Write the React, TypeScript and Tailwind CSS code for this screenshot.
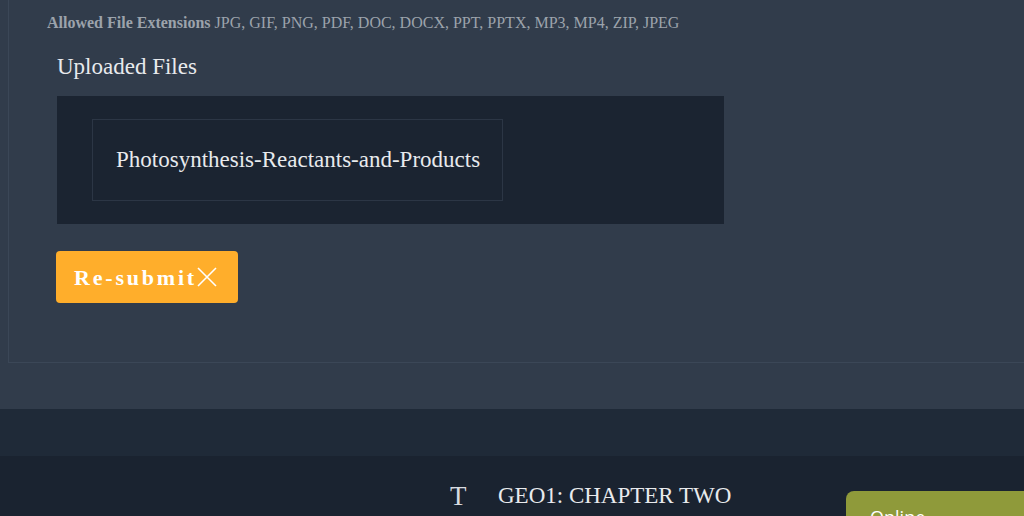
import React from "react";

export default function App() {
  return (
    <div className="relative h-[516px] w-[1024px] overflow-hidden bg-[#313c4b] font-['Liberation_Serif',serif]">
      <div className="h-[409px] pl-[8px]">
        <div className="h-[363px] border-b border-l border-[#3b4757] pt-[14px]">
          <div className="pl-[38px] text-[16px] leading-[18px] text-[#9ca3ab]">
            <span className="font-bold">Allowed File Extensions</span> JPG, GIF, PNG, PDF, DOC, DOCX, PPT, PPTX, MP3, MP4, ZIP, JPEG
          </div>
          <div className="mt-[22px] pl-[48px] text-[23px] leading-[26px] text-[#e8eaed]">Uploaded Files</div>
          <div className="ml-[48px] mt-[16px] h-[128px] w-[667px] bg-[#1b2431] pl-[35px] pt-[23px]">
            <div className="flex h-[82px] w-[411px] items-center border border-[#2c3645] pl-[23px] text-[23px] text-[#e8eaed]">
              Photosynthesis-Reactants-and-Products
            </div>
          </div>
          <button className="ml-[47px] mt-[27px] flex h-[52px] w-[182px] items-center rounded-[4px] bg-[#ffae2b] pl-[18px] text-[22px] font-bold tracking-[2.8px] text-white">
            Re-submit
            <svg width="22" height="22" viewBox="0 0 22 22" className="ml-[-1px]">
              <path d="M2 2 L20 20 M20 2 L2 20" stroke="white" strokeWidth="1.6" fill="none" />
            </svg>
          </button>
        </div>
      </div>
      <div className="h-[47px] bg-[#1f2a38]" />
      <div className="flex h-[60px] bg-[#1a2330] pl-[450px] pt-[27px]">
        <span className="w-[48px] text-[27px] leading-[26px] text-[#d8dbe0]">T</span>
        <span className="text-[23px] leading-[26px] text-[#e8eaed]">GEO1: CHAPTER TWO</span>
      </div>
      <div className="absolute left-[846px] top-[491px] h-[40px] w-[200px] rounded-tl-[8px] bg-[#8f9a3a] pl-[24px] pt-[14px] font-['Open_Sans',sans-serif] text-[18px] leading-[24px] text-white">
        Online
      </div>
    </div>
  );
}
